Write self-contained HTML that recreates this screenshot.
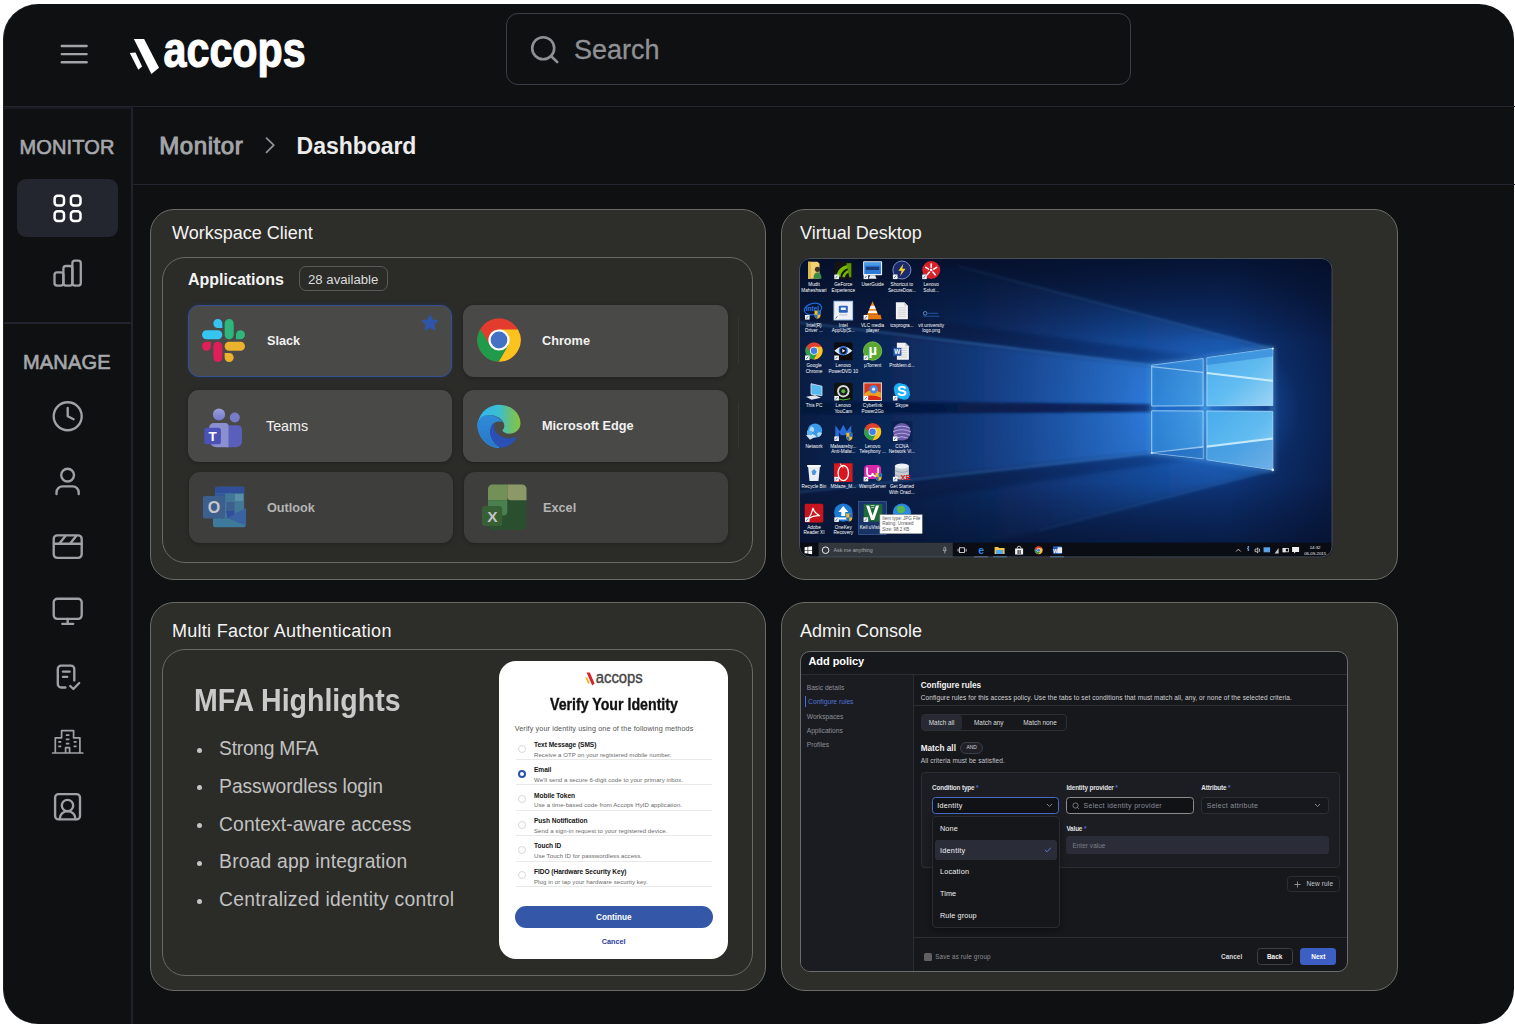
<!DOCTYPE html>
<html lang="en">
<head>
<meta charset="utf-8">
<title>Accops Dashboard</title>
<style>
*{box-sizing:border-box;margin:0;padding:0}
html,body{width:1515px;height:1031px;overflow:hidden;background:#fff}
body{position:relative;font-family:"Liberation Sans",sans-serif;color:#fff;-webkit-font-smoothing:antialiased}
.abs{position:absolute}
.win{position:absolute;left:2.7px;top:3.8px;width:1511.6px;height:1019.9px;background:#0f1012;border-radius:35px;overflow:hidden;border-left:1px solid #1d2029}
.hline{position:absolute;height:1px;background:#23262e}
.vline{position:absolute;width:1px;background:#23262e}
.t{position:absolute;white-space:nowrap;line-height:1}
svg{position:absolute;overflow:visible}
.ico{fill:none;stroke:#a0a1a6;stroke-width:2.35;stroke-linecap:round;stroke-linejoin:round}
.card{position:absolute;background:#2d2d29;border:1px solid #6b6b68;border-radius:24px}
.panel{position:absolute;background:#2b2b28;border:1px solid #696966;border-radius:23px}
.tile{position:absolute;background:#494947;border-radius:11px;box-shadow:0 1px 4px rgba(0,0,0,.25)}
.tile .lbl{position:absolute;left:78px;top:0;height:100%;display:flex;align-items:center;font-size:12.7px;font-weight:700;color:#f2f2f2;white-space:nowrap}
</style>
</head>
<body>
<div class="win"></div>

<!-- ===== header ===== -->
<div class="hline" style="left:3px;top:105.5px;width:1512px;height:1.2px"></div>
<svg style="left:60px;top:44px" width="28" height="20" viewBox="0 0 28 20"><g stroke="#a3a4a8" stroke-width="2.4" stroke-linecap="round"><line x1="1.8" y1="2" x2="26.6" y2="2"/><line x1="1.8" y1="10.1" x2="26.6" y2="10.1"/><line x1="1.8" y1="18.3" x2="26.6" y2="18.3"/></g></svg>
<!-- logo -->
<svg style="left:128px;top:30px" width="190" height="56" viewBox="0 0 190 56">
  <polygon points="5.9,9 16.1,9 31,37.8 23.4,44" fill="#fff"/>
  <polygon points="1.8,23 7.5,22.5 14.1,36.5 10.3,39.7" fill="#fff"/>
  <text x="35.6" y="36.6" font-family="Liberation Sans, sans-serif" font-weight="700" font-size="50" fill="#fff" stroke="#fff" stroke-width="1.2" stroke-linejoin="round" textLength="142" lengthAdjust="spacingAndGlyphs">accops</text>
</svg>
<!-- search -->
<div class="abs" style="left:506px;top:13px;width:625px;height:72px;border:1px solid #3c3f48;border-radius:12px"></div>
<svg style="left:528px;top:34px" width="34" height="32" viewBox="0 0 34 32"><g fill="none" stroke="#8f9095" stroke-width="2.6" stroke-linecap="round"><circle cx="15.2" cy="14.2" r="11"/><line x1="23.2" y1="22.2" x2="29.2" y2="28"/></g></svg>
<div class="t" style="left:574px;top:36.5px;font-size:27px;color:#909196;line-height:27px;-webkit-text-stroke:.3px #909196">Search</div>

<!-- ===== sidebar ===== -->
<div class="vline" style="left:131.2px;top:106px;height:918px;width:1.4px;background:#20232b"></div>
<div class="hline" style="left:3px;top:106.5px;width:128.5px;height:2.3px;background:#191c24"></div>
<div class="t" style="left:19.6px;top:136.5px;font-size:20px;color:#a6a7ab;letter-spacing:.12px;line-height:20px;-webkit-text-stroke:.65px #a6a7ab">MONITOR</div>
<div class="abs" style="left:17px;top:179px;width:101px;height:58px;border-radius:9px;background:#23262f"></div>
<div class="hline" style="left:3px;top:322px;width:129px;height:1.6px;background:#1f232c"></div>
<div class="t" style="left:22.9px;top:351.8px;font-size:20px;color:#a6a7ab;letter-spacing:.2px;line-height:20px;-webkit-text-stroke:.65px #a6a7ab">MANAGE</div>

<!-- ===== breadcrumb ===== -->
<div class="hline" style="left:132.5px;top:183.6px;width:1382px"></div>
<div class="t" style="left:159.3px;top:134.4px;font-size:24px;color:#a3a4a8;line-height:24px;-webkit-text-stroke:1px #a3a4a8;letter-spacing:.55px">Monitor</div>
<svg style="left:264px;top:136px" width="12" height="18" viewBox="0 0 12 18"><polyline points="2.5,2.2 9.8,9.2 2.5,16.4" fill="none" stroke="#8f9095" stroke-width="1.8" stroke-linecap="round" stroke-linejoin="round"/></svg>
<div class="t" style="left:296.6px;top:135.2px;font-size:23px;font-weight:700;color:#ececec;line-height:23px;letter-spacing:-.05px">Dashboard</div>

<!-- ===== cards ===== -->
<div class="card" style="left:150px;top:209px;width:616px;height:371px"></div>
<div class="card" style="left:781px;top:209px;width:617px;height:371px"></div>
<div class="card" style="left:150px;top:602px;width:616px;height:389px"></div>
<div class="card" style="left:781px;top:602px;width:617px;height:389px"></div>
<div class="t" style="left:172px;top:224.4px;font-size:18px;color:#f4f4f4;line-height:18px">Workspace Client</div>
<div class="t" style="left:800px;top:224.4px;font-size:18px;color:#f4f4f4;line-height:18px">Virtual Desktop</div>
<div class="t" style="left:172px;top:621.5px;font-size:18px;color:#f4f4f4;line-height:18px;letter-spacing:.28px">Multi Factor Authentication</div>
<div class="t" style="left:800px;top:621.5px;font-size:18px;color:#f4f4f4;line-height:18px">Admin Console</div>

<svg style="left:0;top:0" width="133" height="1031" viewBox="0 0 133 1031">
 <g fill="none" stroke="#fff" stroke-width="2.5" stroke-linejoin="round">
  <rect x="54.6" y="195.8" width="9.4" height="9.6" rx="3"/><rect x="70.9" y="195.8" width="9.6" height="9.6" rx="3"/>
  <rect x="54.6" y="211.3" width="9.4" height="9.7" rx="3"/><rect x="70.9" y="211.3" width="9.6" height="9.7" rx="3"/>
 </g>
 <g class="ico" style="stroke-width:2.3">
  <rect x="54.5" y="272.3" width="8.9" height="13.3" rx="2.6"/><rect x="63.4" y="266" width="9" height="19.6" rx="2.6"/><rect x="72.4" y="260.6" width="8.4" height="25" rx="2.6"/>
 </g>
 <g class="ico">
  <circle cx="67.7" cy="416.2" r="14"/><polyline points="67.7,408 67.7,416.3 73.6,419.3"/>
  <circle cx="67.6" cy="475.1" r="6.4"/><path d="M56.5,494v-1.6a6,6 0 0 1 6,-6h10.2a6,6 0 0 1 6,6v1.6"/>
  <rect x="53.7" y="535.3" width="28" height="22.6" rx="3.6"/><line x1="54" y1="543.7" x2="81.5" y2="543.7"/><line x1="59.6" y1="543.2" x2="65.2" y2="536.2"/><line x1="70.4" y1="543.2" x2="76" y2="536.2"/>
  <rect x="53.7" y="598.7" width="28" height="20.2" rx="3.6"/><line x1="67.7" y1="619" x2="67.7" y2="623.6"/><line x1="62.3" y1="623.8" x2="73.2" y2="623.8"/>
  <path d="M65.4,687.5H61.2a3.4,3.4 0 0 1 -3.4,-3.4V669a3.4,3.4 0 0 1 3.4,-3.4H70.9a3.4,3.4 0 0 1 3.4,3.4V680.4"/><line x1="63" y1="671.6" x2="69.6" y2="671.6"/><line x1="63" y1="676.8" x2="67.2" y2="676.8"/><polyline points="70.2,686 73.4,689 79.2,683"/>
  <rect x="55.1" y="794.1" width="24.9" height="25.3" rx="3.4"/><circle cx="67.5" cy="805.5" r="5.7"/><path d="M59.7,819a7.9,7.9 0 0 1 15.8,0"/>
 </g>
 <g class="ico" style="stroke-width:1.7;stroke-linecap:butt">
  <line x1="52.6" y1="753" x2="82.8" y2="753" style="stroke-linecap:round"/>
  <polyline points="55.3,753 55.3,737.8 61.6,737.8 61.6,730.6 73.6,730.6 73.6,737.8 79.9,737.8 79.9,753"/>
  <polyline points="65.6,753 65.6,747.6 69.6,747.6 69.6,753"/>
  <path d="M65.8,735.2h3.6M65.8,739.4h3.6M65.8,743.6h3.6M58.3,741.8h3M58.3,746.3h3M58.3,750h0M73.6,741.8h3M73.6,746.3h3M73,739h0"/>
 </g>
</svg>
<!-- ===== workspace client ===== -->
<div class="panel" style="left:162px;top:257px;width:591px;height:306px"></div>
<div class="abs" style="left:738px;top:317px;width:1px;height:47px;background:#353532"></div><div class="abs" style="left:738px;top:402px;width:1px;height:47px;background:#353532"></div>
<div class="t" style="left:188px;top:272px;font-size:16px;font-weight:700;color:#f4f4f4;line-height:16px">Applications</div>
<div class="abs" style="left:299px;top:266px;width:89px;height:25px;border:1px solid #5a5a58;border-radius:7px"></div>
<div class="t" style="left:308px;top:272.5px;font-size:13.2px;color:#dcdcdc;line-height:13px">28 available</div>

<div class="tile" style="left:188px;top:305px;width:264px;height:72px;border:1px solid #34518f;box-shadow:0 0 5px rgba(40,70,140,.35)"><span class="lbl">Slack</span></div>
<div class="tile" style="left:463px;top:305px;width:265px;height:72px"><span class="lbl" style="left:79px">Chrome</span></div>
<div class="tile" style="left:188px;top:390px;width:264px;height:72px"><span class="lbl" style="font-weight:400;font-size:14.3px;left:78px">Teams</span></div>
<div class="tile" style="left:463px;top:390px;width:265px;height:72px"><span class="lbl" style="left:79px">Microsoft Edge</span></div>
<div class="tile" style="left:189px;top:472px;width:264px;height:71px;background:#3e3e3c"><span class="lbl" style="color:#b4b4b4">Outlook</span></div>
<div class="tile" style="left:464px;top:472px;width:264px;height:71px;background:#3e3e3c"><span class="lbl" style="color:#b4b4b4;left:79px">Excel</span></div>

<!-- star -->
<svg style="left:421px;top:314px" width="18" height="17" viewBox="0 0 18 17"><path d="M9,0.8 L11.5,6 17.2,6.7 13,10.6 14.1,16.3 9,13.5 3.9,16.3 5,10.6 0.8,6.7 6.5,6Z" fill="#2f55a8" stroke="#2f55a8" stroke-width="1" stroke-linejoin="round"/></svg>
<!-- slack -->
<svg style="left:202px;top:319px" width="43" height="43" viewBox="0 0 122.8 122.8">
<path d="M25.8 77.6c0 7.1-5.8 12.900-12.900 12.900S0 84.700 0 77.600s5.800-12.900 12.900-12.900h12.900v12.900zm6.500 0c0-7.100 5.800-12.900 12.900-12.900s12.900 5.800 12.900 12.900v32.300c0 7.100-5.800 12.900-12.900 12.900s-12.900-5.800-12.900-12.900V77.600z" fill="#e01e5a"/>
<path d="M45.200 25.800c-7.100 0-12.900-5.800-12.900-12.900S38.100 0 45.200 0s12.900 5.800 12.900 12.900v12.900H45.200zm0 6.500c7.100 0 12.900 5.800 12.900 12.900s-5.800 12.900-12.900 12.900H12.900C5.800 58.100 0 52.300 0 45.200s5.800-12.900 12.900-12.900h32.300z" fill="#36c5f0"/>
<path d="M97 45.200c0-7.100 5.800-12.900 12.900-12.900s12.900 5.800 12.900 12.900-5.800 12.900-12.900 12.900H97V45.200zm-6.500 0c0 7.100-5.800 12.900-12.900 12.900s-12.900-5.800-12.900-12.900V12.900C64.700 5.800 70.500 0 77.600 0s12.900 5.800 12.900 12.900v32.300z" fill="#2eb67d"/>
<path d="M77.600 97c7.100 0 12.900 5.800 12.900 12.900s-5.800 12.900-12.900 12.900-12.900-5.800-12.900-12.900V97h12.900zm0-6.500c-7.100 0-12.900-5.800-12.900-12.900s5.800-12.900 12.900-12.900h32.300c7.100 0 12.900 5.800 12.900 12.900s-5.800 12.900-12.900 12.900H77.600z" fill="#ecb22e"/>
</svg>
<!-- chrome -->
<svg style="left:474.6px;top:316.4px" width="48" height="48" viewBox="0 0 48 48">
<circle cx="24" cy="24" r="21.7" fill="#e33b2e"/>
<path d="M24.00,13.40 L42.93,13.40 A21.7,21.7 0 0 1 23.71,45.70 L33.18,29.30 Z" fill="#fcc31e"/>
<path d="M33.18,29.30 L23.71,45.70 A21.7,21.7 0 0 1 5.35,12.90 L14.82,29.30 Z" fill="#1f9b4b"/>
<circle cx="24" cy="24" r="10.6" fill="#fff"/><circle cx="24" cy="24" r="8.4" fill="#4471c4"/>
</svg>
<!-- teams -->
<svg style="left:200px;top:404px" width="48" height="48" viewBox="200 404 48 48">
<defs><linearGradient id="tg1" x1="0" y1="0" x2="0" y2="1"><stop offset="0" stop-color="#9aa0dc"/><stop offset="1" stop-color="#7378c8"/></linearGradient></defs>
<circle cx="219" cy="414.5" r="6.1" fill="url(#tg1)"/><circle cx="234.8" cy="417.5" r="5" fill="#787cc8"/>
<path d="M226,425.300h11.500a4.500,4.500 0 0 1 4.500,4.500v11.500a6,6 0 0 1 -6,6h-10z" fill="#5a5fba"/>
<path d="M214,423h11.200a3.300,3.300 0 0 1 3.300,3.300v21h-11.500a8,8 0 0 1 -8,-8v-11.300a5,5 0 0 1 5,-5z" fill="#8a8fd0"/>
<rect x="204.200" y="427.800" width="16.700" height="16.500" rx="2.600" fill="#4a52b6"/>
<text x="212.600" y="440.600" text-anchor="middle" font-family="Liberation Sans, sans-serif" font-weight="700" font-size="13.500" fill="#fff">T</text>
</svg>
<!-- edge -->
<svg style="left:465px;top:395px" width="80" height="65" viewBox="0 0 126.900 103.100">
<defs><linearGradient id="eg1" x1="0" y1="0" x2="1" y2="0"><stop offset="0" stop-color="#2fb4f0"/><stop offset=".5" stop-color="#3bbfd0"/><stop offset=".78" stop-color="#6cc070"/><stop offset="1" stop-color="#86c540"/></linearGradient>
<linearGradient id="eg2" x1="0" y1="0" x2="0" y2="1"><stop offset="0" stop-color="#2f8bd8"/><stop offset="1" stop-color="#2a76c8"/></linearGradient></defs>
<path d="M82.500,65.500 C76,69.500 66,70.500 58,66 C48,61 44,53 47.500,45 L40,50 C36,60 40,75 54,83.500 C68,84.500 79,76 82.500,65.500Z" fill="#2950b2"/>
<path d="M20.300,44 C18.500,62 32,83 54,83.500 C42,76 35,62 40.500,50 C44,43 51,40 59,42 C53,35 41,30.500 30,33.500 C25,35.500 22,39 20.300,44Z" fill="url(#eg2)" stroke="#2f8bd8" stroke-width="1.4"/>
<path d="M20.300,44 C24,25 40,15.300 54,15.300 C73,15.300 88,29 88,45 C88,55 80,61.500 70,61.500 C65,61.500 61,59.500 59,56.500 C62.500,53 63.500,48 61,43.500 C56,34.500 42,29 30,33.500 C25,35.500 22,39 20.300,44Z" fill="url(#eg1)"/>
</svg>
<!-- outlook -->
<svg style="left:200px;top:482px" width="50" height="50" viewBox="200 482 50 50">
<rect x="215.200" y="486.700" width="29" height="32" rx="2" fill="#427798"/>
<path d="M217.200,486.700h25a2,2 0 0 1 2,2v4.600h-29v-4.600a2,2 0 0 1 2,-2z" fill="#2f4f9a"/>
<rect x="215.200" y="493.300" width="10" height="9" fill="#34599a"/><rect x="226.500" y="502" width="8" height="9.500" fill="#3d5f8e"/><rect x="235" y="494" width="8" height="7" fill="#5a8ea8"/>
<path d="M213,518v7.300a2,2 0 0 0 2,2h28.800a2,2 0 0 0 2,-2v-16.800l-19,10z" fill="#3e7a9c"/>
<path d="M245.800,508.500v17l-19.800,-8z" fill="#3a62a0"/>
<path d="M226,511l8.500,0 0,3.200 -7,3.800z" fill="#2f4f9a"/>
<rect x="202.900" y="496.100" width="22.100" height="22.400" rx="1.800" fill="#3c5f8e"/>
<text x="214" y="512.600" text-anchor="middle" font-family="Liberation Sans, sans-serif" font-weight="700" font-size="16" fill="#c8c8c8">O</text>
</svg>
<!-- excel -->
<svg style="left:480px;top:482px" width="50" height="50" viewBox="480 482 50 50">
<rect x="488" y="484.500" width="38.500" height="45.400" rx="4.500" fill="#2a4f2e"/>
<path d="M492.500,484.500h14.800v15.800h-19.300v-11.300a4.500,4.500 0 0 1 4.500,-4.500z" fill="#739058"/>
<path d="M507.300,484.500h14.700a4.500,4.500 0 0 1 4.500,4.500v11.300h-15.500a3.700,3.700 0 0 1 -3.700,-3.700z" fill="#8c9868"/>
<path d="M488,500.300h19.300v11.200a4,4 0 0 1 -4,4h-15.300z" fill="#4a8050"/>
<rect x="482" y="505.900" width="20.200" height="20.200" rx="3.200" fill="#376037"/>
<text x="492.300" y="521.800" text-anchor="middle" font-family="Liberation Sans, sans-serif" font-weight="700" font-size="15.500" fill="#c4c4c4">X</text>
</svg>

<!--DESKTOP-->
<!-- ===== virtual desktop ===== -->
<svg style="left:799.4px;top:257.5px" width="533.6" height="299.5" viewBox="799.4 257.5 533.6 299.5" font-family="Liberation Sans, sans-serif">
<defs>
<clipPath id="dclip"><rect x="799.4" y="257.5" width="533.6" height="299.5" rx="10.5"/></clipPath>
<radialGradient id="dglow" cx="1165" cy="410" r="235" gradientUnits="userSpaceOnUse" gradientTransform="translate(1165 410) scale(1 .72) translate(-1165 -410)"><stop offset="0" stop-color="#1d6cd2" stop-opacity=".8"/><stop offset=".3" stop-color="#1558b8" stop-opacity=".46"/><stop offset=".65" stop-color="#0f4090" stop-opacity=".2"/><stop offset="1" stop-color="#0a2560" stop-opacity="0"/></radialGradient>
<radialGradient id="dhalo" cx="1208" cy="408" r="92" gradientUnits="userSpaceOnUse" gradientTransform="translate(1208 408) scale(1 .85) translate(-1208 -408)"><stop offset="0" stop-color="#3aa0f8" stop-opacity=".5"/><stop offset=".55" stop-color="#2a86ea" stop-opacity=".26"/><stop offset="1" stop-color="#1f74dc" stop-opacity="0"/></radialGradient>
<linearGradient id="dbg" x1="0" y1="0" x2="1" y2="0"><stop offset="0" stop-color="#0a1a3e"/><stop offset=".4" stop-color="#0b2150"/><stop offset=".8" stop-color="#0c2b66"/><stop offset="1" stop-color="#091b44"/></linearGradient>
<linearGradient id="dvig" x1="0" y1="0" x2="0" y2="1"><stop offset="0" stop-color="#030a1e" stop-opacity=".7"/><stop offset=".28" stop-color="#030a1e" stop-opacity="0"/><stop offset=".75" stop-color="#030a1e" stop-opacity="0"/><stop offset="1" stop-color="#030a1e" stop-opacity=".55"/></linearGradient>
<linearGradient id="beam" x1="1160" y1="0" x2="800" y2="0" gradientUnits="userSpaceOnUse"><stop offset="0" stop-color="#3484e2" stop-opacity=".8"/><stop offset=".4" stop-color="#2264c2" stop-opacity=".5"/><stop offset=".75" stop-color="#184c9c" stop-opacity=".22"/><stop offset="1" stop-color="#164694" stop-opacity=".06"/></linearGradient>
<linearGradient id="beam2" x1="1270" y1="0" x2="880" y2="0" gradientUnits="userSpaceOnUse"><stop offset="0" stop-color="#2a80e6" stop-opacity=".5"/><stop offset=".5" stop-color="#1e62c4" stop-opacity=".28"/><stop offset="1" stop-color="#16469c" stop-opacity=".04"/></linearGradient>
<linearGradient id="shade" x1="1160" y1="0" x2="800" y2="0" gradientUnits="userSpaceOnUse"><stop offset="0" stop-color="#092560" stop-opacity=".95"/><stop offset=".6" stop-color="#071a46" stop-opacity=".95"/><stop offset="1" stop-color="#07163a" stop-opacity=".8"/></linearGradient>
<linearGradient id="paneL" x1="0" y1="0" x2="1" y2="0"><stop offset="0" stop-color="#3088da"/><stop offset="1" stop-color="#4aa6ea"/></linearGradient>
<linearGradient id="paneR" x1="0" y1="0" x2="1" y2="1"><stop offset="0" stop-color="#4aaeee"/><stop offset=".55" stop-color="#66c2f5"/><stop offset="1" stop-color="#a4dcfa"/></linearGradient>
<filter id="b1" x="-10%" y="-10%" width="120%" height="120%"><feGaussianBlur stdDeviation="2.6"/></filter>
<filter id="b2" x="-10%" y="-10%" width="120%" height="120%"><feGaussianBlur stdDeviation="1.1"/></filter>
</defs>
<g clip-path="url(#dclip)">
<rect x="799.4" y="257.5" width="533.6" height="299.5" fill="url(#dbg)"/>
<rect x="799.4" y="257.5" width="533.6" height="299.5" fill="url(#dglow)"/>
<g filter="url(#b1)">
<polygon points="1273,348.600 1203.600,357 800,301.600 800,257 927,257" fill="url(#beam2)"/>
<polygon points="1152.300,364.700 800,321.900 800,403 1152.300,405" fill="url(#beam)"/>
<polygon points="1152.300,410 800,411.500 800,491.700 1152.300,452.600" fill="url(#beam)"/>
<polygon points="1273,469.300 1203.600,457 800,516 800,557 938,557" fill="url(#beam2)" opacity=".9"/>
</g><g filter="url(#b2)">
<polygon points="1152.300,403.800 800,400.800 800,413.600 1152.300,411.200" fill="url(#shade)"/>
</g>
<g stroke-linecap="round" fill="none" filter="url(#b2)">
<line x1="1273" y1="348.600" x2="960" y2="266" stroke="#58a8f6" stroke-opacity=".3" stroke-width="1.600"/>
<line x1="1152.300" y1="364.700" x2="800" y2="321.900" stroke="#58a8f6" stroke-opacity=".38" stroke-width="1.600"/>
<line x1="1152.300" y1="452.600" x2="800" y2="491.700" stroke="#58a8f6" stroke-opacity=".3" stroke-width="1.600"/>
<line x1="1273" y1="469.300" x2="1040" y2="530" stroke="#58a8f6" stroke-opacity=".18" stroke-width="1.600"/>
</g>
<rect x="799.4" y="257.5" width="533.6" height="299.5" fill="url(#dhalo)"/>
<rect x="799.4" y="257.5" width="533.6" height="299.5" fill="url(#dvig)"/>
<g fill="none" stroke="#6cc4ff" stroke-width="2.400" stroke-opacity=".6" filter="url(#b1)"><polygon points="1152.100,364.800 1203.500,358.100 1203.500,458.300 1152.100,452.500"/><polygon points="1207.300,357.200 1273.200,348 1273.200,469.400 1207.300,459.200"/></g>
<g stroke="#b4e0ff" stroke-width=".8" stroke-linejoin="round">
<polygon points="1152.100,364.800 1203.500,358.100 1203.500,405.300 1152.100,405.500" fill="url(#paneL)" fill-opacity=".8"/>
<polygon points="1152.100,410.300 1203.500,410.500 1203.500,458.300 1152.100,452.500" fill="url(#paneL)" fill-opacity=".8"/>
<polygon points="1207.300,357.200 1273.200,348 1273.200,405 1207.300,405.300" fill="url(#paneR)" fill-opacity=".95"/>
<polygon points="1207.300,410.500 1273.200,410.800 1273.200,469.400 1207.300,459.200" fill="url(#paneR)" fill-opacity=".95"/>
</g>
<polygon points="1207.300,357.200 1273.200,348 1273.200,356 1207.300,364.500" fill="#2a7cd4" opacity=".55"/>
<polygon points="1207.300,371.600 1273.200,379.300 1273.200,381.300 1207.300,373.600" fill="#e0f6ff" opacity=".8"/>
<polygon points="1152.100,364.800 1203.500,358.100 1203.500,371.800 1152.100,366" fill="#2a7cd4" opacity=".4"/>
<polygon points="1152.100,365.400 1203.500,371.200 1203.500,372.600 1152.100,366.800" fill="#e0f6ff" opacity=".55"/>
<polygon points="1207.300,445 1273.200,437 1273.200,439.200 1207.300,447.200" fill="#e0f6ff" opacity=".75"/>
<polygon points="1207.300,447.200 1273.200,439.200 1273.200,469.400 1207.300,459.200" fill="#2a7ad0" opacity=".4"/>
<polygon points="1152.100,451.800 1203.500,445.600 1203.500,447.200 1152.100,453" fill="#e0f6ff" opacity=".5"/>
<polygon points="1152.100,452.500 1203.500,447.200 1203.500,458.300" fill="#1a5ab4" opacity=".5"/>
<circle cx="1273.200" cy="348" r="1.100" fill="#fff" opacity=".8"/><circle cx="1273.200" cy="469.400" r="1.300" fill="#fff" opacity=".85"/><circle cx="1152.100" cy="452.500" r="1" fill="#fff" opacity=".7"/>
<g>
<path d="M808.4,261.3h9.500l2,2v15h-11.500z" fill="#f0d070"/><path d="M808.4,261.3h3v17h-3z" fill="#e0b850"/><circle cx="817.9" cy="268.8" r="2.600" fill="#3a3020"/><path d="M813.9,278.3q0,-6.500 4,-6.500q4,0 4,6.500z" fill="#3e8a4a"/>
<text x="814.4" y="285.6" text-anchor="middle" font-size="4.700" fill="#fff">Mudit</text>
<text x="814.4" y="291.1" text-anchor="middle" font-size="4.700" fill="#fff">Maheshwari</text>
<rect x="834.7" y="261.3" width="18" height="17.500" fill="#141414"/><path d="M836.7,276.8q1,-11 13,-12.500v3q-8,1.500 -9,9.500zM842.7,276.8q1,-6 7,-7.500v2.500q-3.500,1 -4.500,5z" fill="#76b900"/><path d="M846.7,262.8l5,0 0,14 -2,0z" fill="#5a9a00"/><rect x="834.7" y="274.0" width="4.600" height="4.600" fill="#f4f4f4"/><path d="M835.9,277.6l2,-2.400" stroke="#2a5ab0" stroke-width=".8" fill="none"/>
<text x="843.7" y="285.6" text-anchor="middle" font-size="4.700" fill="#fff">GeForce</text>
<text x="843.7" y="291.1" text-anchor="middle" font-size="4.700" fill="#fff">Experience</text>
<rect x="863.5" y="260.8" width="19" height="14" rx=".8" fill="#e8eef4"/><rect x="864.7" y="262.0" width="16.600" height="11.500" fill="#2a7ad8"/><rect x="866.5" y="266.3" width="13" height="3.200" fill="#1a3a7a"/><rect x="864.7" y="262.0" width="16.600" height="3" fill="#4a9ae8"/><path d="M870.5,274.8h5l1.500,3.500h-8z" fill="#e8eef4"/><rect x="864.0" y="274.0" width="4.600" height="4.600" fill="#f4f4f4"/><path d="M865.2,277.6l2,-2.400" stroke="#2a5ab0" stroke-width=".8" fill="none"/>
<text x="873.0" y="285.6" text-anchor="middle" font-size="4.700" fill="#fff">UserGuide</text>
<circle cx="902.3" cy="269.5" r="9" fill="#1a2a6c" stroke="#8a9ad0" stroke-width=".9"/><path d="M903.8,263.3l-5,7h3.200l-1.500,5.500 5.500,-7.500h-3.300z" fill="#f8d030"/><rect x="893.3" y="274.0" width="4.600" height="4.600" fill="#f4f4f4"/><path d="M894.5,277.6l2,-2.400" stroke="#2a5ab0" stroke-width=".8" fill="none"/>
<text x="902.3" y="285.6" text-anchor="middle" font-size="4.700" fill="#fff">Shortcut to</text>
<text x="902.3" y="291.1" text-anchor="middle" font-size="4.700" fill="#fff">SecureDow...</text>
<circle cx="931.6" cy="269.5" r="9" fill="#d8222a"/><g stroke="#fff" stroke-width="1.500" stroke-linecap="round"><path d="M931.6,263.5v3.500M926.1,266.8l3,1.800M937.1,266.8l-3,1.800M927.6,274.3l2.300,-2.800M935.6,274.3l-2.300,-2.800"/></g><circle cx="931.6" cy="269.5" r="1.300" fill="#fff"/><rect x="922.6" y="274.0" width="4.600" height="4.600" fill="#f4f4f4"/><path d="M923.8,277.6l2,-2.400" stroke="#2a5ab0" stroke-width=".8" fill="none"/>
<text x="931.6" y="285.6" text-anchor="middle" font-size="4.700" fill="#fff">Lenovo</text>
<text x="931.6" y="291.1" text-anchor="middle" font-size="4.700" fill="#fff">Soluti...</text>
<ellipse cx="813.9" cy="308.3" rx="8.800" ry="5.600" fill="none" stroke="#1a6ad0" stroke-width="1.200" transform="rotate(-14 814.4 310.3)"/><text x="812.9" y="310.3" text-anchor="middle" font-size="6.500" font-weight="700" fill="#2a7ae0">intel</text><path d="M814.9,310.3h6v4.500q0,2.500 -3,3.500q-3,-1 -3,-3.500z" fill="#f0c020"/><path d="M817.9,310.3h3v4h-3z" fill="#2a6ad0"/><path d="M814.9,314.3h3v3.800q-3,-1 -3,-3.500z" fill="#2a6ad0"/><rect x="805.4" y="314.5" width="4.600" height="4.600" fill="#f4f4f4"/><path d="M806.6,318.1l2,-2.400" stroke="#2a5ab0" stroke-width=".8" fill="none"/>
<text x="814.4" y="326.1" text-anchor="middle" font-size="4.700" fill="#fff">Intel(R)</text>
<text x="814.4" y="331.6" text-anchor="middle" font-size="4.700" fill="#fff">Driver ...</text>
<rect x="834.4" y="300.8" width="18.600" height="18.600" fill="#eef2f8"/><rect x="834.4" y="300.8" width="18.600" height="18.600" fill="none" stroke="#a8c8f0" stroke-width="1"/><rect x="839.2" y="305.3" width="9" height="7" rx="1" fill="#2a62b8"/><rect x="841.2" y="307.0" width="5" height="2.500" fill="#e8f0fa"/><rect x="839.7" y="313.8" width="8" height="1.200" fill="#c0c8d4"/><rect x="834.7" y="314.5" width="4.600" height="4.600" fill="#f4f4f4"/><path d="M835.9,318.1l2,-2.400" stroke="#2a5ab0" stroke-width=".8" fill="none"/>
<text x="843.7" y="326.1" text-anchor="middle" font-size="4.700" fill="#fff">Intel</text>
<text x="843.7" y="331.6" text-anchor="middle" font-size="4.700" fill="#fff">AppUp(S...</text>
<path d="M873.0,300.8l5.500,13.500h-11z" fill="#f08a18"/><path d="M871.1,305.3h3.800l1.300,3.200h-6.400zM869.2,310.3h7.600l1,2.300h-9.600z" fill="#f4f4f4"/><path d="M865.0,314.3h16l1,4.500h-18z" fill="#e87810"/><rect x="864.0" y="314.5" width="4.600" height="4.600" fill="#f4f4f4"/><path d="M865.2,318.1l2,-2.400" stroke="#2a5ab0" stroke-width=".8" fill="none"/>
<text x="873.0" y="326.1" text-anchor="middle" font-size="4.700" fill="#fff">VLC media</text>
<text x="873.0" y="331.6" text-anchor="middle" font-size="4.700" fill="#fff">player</text>
<path d="M896.3,301.8h8.500l3.500,3.500v13.500h-12z" fill="#f2f2f2"/><path d="M904.8,301.8v3.500h3.500z" fill="#c8c8c8"/><path d="M898.3,307.3h8M898.3,309.5h8M898.3,311.7h8M898.3,313.9h8M898.3,316.1h8" stroke="#b8b8b8" stroke-width=".55"/>
<text x="902.3" y="326.1" text-anchor="middle" font-size="4.700" fill="#fff">tcsprogra...</text>
<circle cx="925.6" cy="312.8" r="1.800" fill="none" stroke="#7ab0e8" stroke-width=".7"/><rect x="928.6" y="312.3" width="10" height=".9" fill="#2a5aa8"/><rect x="923.6" y="315.3" width="16" height=".8" fill="#2a5aa8"/>
<text x="931.6" y="326.1" text-anchor="middle" font-size="4.700" fill="#fff">vit university</text>
<text x="931.6" y="331.6" text-anchor="middle" font-size="4.700" fill="#fff">logo.png</text>
<circle cx="814.4" cy="350.3" r="8.6" fill="#e0402e"/><path d="M814.40,346.26L821.99,346.26A8.6,8.6 0 0 1 814.10,358.89L817.90,352.32Z" fill="#f8c420"/><path d="M817.90,352.32L814.10,358.89A8.6,8.6 0 0 1 807.10,345.75L810.90,352.32Z" fill="#2da04e"/><circle cx="814.4" cy="350.3" r="4.04" fill="#f4f4f4"/><circle cx="814.4" cy="350.3" r="3.23" fill="#3f80e8"/><rect x="805.4" y="355.0" width="4.600" height="4.600" fill="#f4f4f4"/><path d="M806.6,358.6l2,-2.400" stroke="#2a5ab0" stroke-width=".8" fill="none"/>
<text x="814.4" y="366.6" text-anchor="middle" font-size="4.700" fill="#fff">Google</text>
<text x="814.4" y="372.1" text-anchor="middle" font-size="4.700" fill="#fff">Chrome</text>
<rect x="834.4" y="341.8" width="18.600" height="18" rx="1.500" fill="#0c0c10"/><path d="M834.7,350.3q9,-8.500 18,0q-9,8.500 -18,0z" fill="#dceaff"/><circle cx="843.7" cy="350.3" r="4.600" fill="#2a6ad8"/><circle cx="843.7" cy="350.3" r="3.100" fill="#0c1020"/><path d="M842.7,348.5l3,1.800 -3,1.800z" fill="#fff"/><rect x="834.7" y="355.0" width="4.600" height="4.600" fill="#f4f4f4"/><path d="M835.9,358.6l2,-2.400" stroke="#2a5ab0" stroke-width=".8" fill="none"/>
<text x="843.7" y="366.6" text-anchor="middle" font-size="4.700" fill="#fff">Lenovo</text>
<text x="843.7" y="372.1" text-anchor="middle" font-size="4.700" fill="#fff">PowerDVD 10</text>
<circle cx="873.0" cy="350.5" r="9.200" fill="#5aa832"/><circle cx="873.0" cy="350.5" r="9.200" fill="none" stroke="#7cc850" stroke-width=".8"/><text x="873.3" y="355.0" text-anchor="middle" font-size="15" font-weight="700" fill="#fff">µ</text><rect x="864.0" y="355.0" width="4.600" height="4.600" fill="#f4f4f4"/><path d="M865.2,358.6l2,-2.400" stroke="#2a5ab0" stroke-width=".8" fill="none"/>
<text x="873.0" y="366.6" text-anchor="middle" font-size="4.700" fill="#fff">µTorrent</text>
<path d="M897.3,342.3h8.500l3.500,3.500v13.500h-12z" fill="#f2f2f2"/><path d="M905.8,342.3v3.500h3.500z" fill="#c8c8c8"/><path d="M899.3,347.8h8M899.3,350.0h8M899.3,352.2h8M899.3,354.4h8M899.3,356.6h8" stroke="#b8b8b8" stroke-width=".55"/><rect x="893.8" y="347.3" width="8" height="8" fill="#2a5ab4"/><text x="897.8" y="353.6" text-anchor="middle" font-size="6.400" font-weight="700" fill="#fff">W</text>
<text x="902.3" y="366.6" text-anchor="middle" font-size="4.700" fill="#fff">Problem.d...</text>
<path d="M811.4,383.2l11,2.500v9.500l-11,-1.500z" fill="#58b8f0"/><path d="M811.4,383.2l11,2.500v9.500l-11,-1.500z" fill="none" stroke="#d8eefc" stroke-width=".8"/><path d="M806.4,396.2l9,-1.500 6,2.500 -9.500,2z" fill="#dfe6ee"/><path d="M815.4,394.2v2" stroke="#c8d0d8" stroke-width="1.500"/>
<text x="814.4" y="407.0" text-anchor="middle" font-size="4.700" fill="#fff">This PC</text>
<rect x="834.4" y="382.2" width="18.600" height="18" rx="2" fill="#101210"/><circle cx="843.7" cy="390.7" r="6.200" fill="#d8dcd8"/><circle cx="843.7" cy="390.7" r="4.300" fill="#1a1e1a"/><circle cx="843.7" cy="390.7" r="2" fill="#58b838"/><path d="M836.7,398.2q7,2.500 14,0" stroke="#58b838" stroke-width="1" fill="none"/><rect x="834.7" y="395.4" width="4.600" height="4.600" fill="#f4f4f4"/><path d="M835.9,399.0l2,-2.400" stroke="#2a5ab0" stroke-width=".8" fill="none"/>
<text x="843.7" y="407.0" text-anchor="middle" font-size="4.700" fill="#fff">Lenovo</text>
<text x="843.7" y="412.5" text-anchor="middle" font-size="4.700" fill="#fff">YouCam</text>
<rect x="863.7" y="381.9" width="18.600" height="18.600" fill="#e8e0d8"/><rect x="864.7" y="382.9" width="16.600" height="16.600" fill="#d83820"/><path d="M864.7,393.2q8,-7 16.600,-1v7.300h-16.600z" fill="#f0a020"/><circle cx="874.0" cy="388.7" r="4.200" fill="#4a8ae0"/><circle cx="874.0" cy="388.7" r="1.600" fill="#e8f0ff"/><path d="M864.7,396.2q8,-3 16.600,1v2.300h-16.600z" fill="#d82818"/><rect x="864.0" y="395.4" width="4.600" height="4.600" fill="#f4f4f4"/><path d="M865.2,399.0l2,-2.400" stroke="#2a5ab0" stroke-width=".8" fill="none"/>
<text x="873.0" y="407.0" text-anchor="middle" font-size="4.700" fill="#fff">Cyberlink</text>
<text x="873.0" y="412.5" text-anchor="middle" font-size="4.700" fill="#fff">Power2Go</text>
<circle cx="899.8" cy="388.2" r="5.600" fill="#18a8f0"/><circle cx="904.8" cy="393.7" r="5.600" fill="#18a8f0"/><circle cx="902.3" cy="390.9" r="7.600" fill="#20b0f4"/><text x="902.3" y="396.0" text-anchor="middle" font-size="14.500" font-weight="700" fill="#fff">S</text><rect x="893.3" y="395.4" width="4.600" height="4.600" fill="#f4f4f4"/><path d="M894.5,399.0l2,-2.400" stroke="#2a5ab0" stroke-width=".8" fill="none"/>
<text x="902.3" y="407.0" text-anchor="middle" font-size="4.700" fill="#fff">Skype</text>
<circle cx="815.4" cy="430.2" r="7.200" fill="#3a9ae8"/><path d="M811.4,425.7q4,1 3,5q-3,2 -5,-1zM817.4,432.7q3,-2 5,0q-1,3 -4,4z" fill="#a8dcf8"/><path d="M806.4,434.7l6,-1.500 4.500,2.500 -6.500,3.500z" fill="#d0e4f4"/><path d="M807.4,429.7l5,1v4l-5,-.5z" fill="#58b0f0"/>
<text x="814.4" y="447.5" text-anchor="middle" font-size="4.700" fill="#fff">Network</text>
<path d="M835.7,436.7v-12l4.500,6 3.500,-6.500 3.500,6.500 4.500,-6v12h-3.600v-5l-2,3h-4.800l-2,-3v5z" fill="#2a6ad8"/><path d="M846.7,432.2h6v4.500q0,2.500 -3,3.500q-3,-1 -3,-3.500z" fill="#f0c020"/><path d="M849.7,432.2h3v4h-3z" fill="#2a6ad0"/><path d="M846.7,436.2h3v3.800q-3,-1 -3,-3.500z" fill="#2a6ad0"/><rect x="834.7" y="435.9" width="4.600" height="4.600" fill="#f4f4f4"/><path d="M835.9,439.5l2,-2.400" stroke="#2a5ab0" stroke-width=".8" fill="none"/>
<text x="843.7" y="447.5" text-anchor="middle" font-size="4.700" fill="#fff">Malwareby...</text>
<text x="843.7" y="453.0" text-anchor="middle" font-size="4.700" fill="#fff">Anti-Malw...</text>
<circle cx="873.0" cy="431.2" r="8.6" fill="#e0402e"/><path d="M873.00,427.16L880.59,427.16A8.6,8.6 0 0 1 872.70,439.79L876.50,433.22Z" fill="#f8c420"/><path d="M876.50,433.22L872.70,439.79A8.6,8.6 0 0 1 865.70,426.65L869.50,433.22Z" fill="#2da04e"/><circle cx="873.0" cy="431.2" r="4.04" fill="#f4f4f4"/><circle cx="873.0" cy="431.2" r="3.23" fill="#3f80e8"/>
<text x="873.0" y="447.5" text-anchor="middle" font-size="4.700" fill="#fff">Lenovo</text>
<text x="873.0" y="453.0" text-anchor="middle" font-size="4.700" fill="#fff">Telephony ...</text>
<rect x="891.8" y="420.7" width="21" height="21" fill="#0a1e48" opacity=".7"/><circle cx="902.3" cy="431.2" r="8.800" fill="#6a5aa8"/><path d="M894.3,427.7q8,-4 16,0M893.5,431.2q8.800,-4 17.600,0M894.3,434.7q8,-4 16,0M896.3,437.7q6,-3 12,0" stroke="#b8b0e0" stroke-width=".9" fill="none"/><rect x="893.3" y="435.9" width="4.600" height="4.600" fill="#f4f4f4"/><path d="M894.5,439.5l2,-2.400" stroke="#2a5ab0" stroke-width=".8" fill="none"/>
<text x="902.3" y="447.5" text-anchor="middle" font-size="4.700" fill="#fff">CCNA</text>
<text x="902.3" y="453.0" text-anchor="middle" font-size="4.700" fill="#fff">Network Vi...</text>
<path d="M808.4,465.1l12,0 -1.500,15.500h-9z" fill="#e8eef4"/><path d="M807.6,464.6h13.600v2h-13.600z" fill="#f8fafc"/><path d="M811.9,471.1l2.500,-2.500 2.500,2.500 -1.500,3.500h-2.500z" fill="#4a9ae0"/>
<text x="814.4" y="487.9" text-anchor="middle" font-size="4.700" fill="#fff">Recycle Bin</text>
<rect x="834.4" y="462.8" width="18.600" height="18.600" fill="#d81820"/><ellipse cx="843.7" cy="472.6" rx="5.200" ry="7.600" fill="none" stroke="#fff" stroke-width="1.300"/><path d="M840.7,463.1q1,3 3,4" stroke="#fff" stroke-width="1" fill="none"/><rect x="834.7" y="476.3" width="4.600" height="4.600" fill="#f4f4f4"/><path d="M835.9,479.9l2,-2.400" stroke="#2a5ab0" stroke-width=".8" fill="none"/>
<text x="843.7" y="487.9" text-anchor="middle" font-size="4.700" fill="#fff">Mblaze_M...</text>
<rect x="864.5" y="464.6" width="17" height="14" rx="4" fill="#d828a8"/><path d="M867.5,467.1v5.500q0,3 2.750,3q2.750,0 2.750,-3q0,3 2.750,3q2.750,0 2.750,-3v-5.500" stroke="#fff" stroke-width="1.600" fill="none"/><path d="M876.0,472.6h6v4.500q0,2.500 -3,3.500q-3,-1 -3,-3.500z" fill="#f0c020"/><path d="M879.0,472.6h3v4h-3z" fill="#2a6ad0"/><path d="M876.0,476.6h3v3.800q-3,-1 -3,-3.500z" fill="#2a6ad0"/><rect x="864.0" y="476.3" width="4.600" height="4.600" fill="#f4f4f4"/><path d="M865.2,479.9l2,-2.400" stroke="#2a5ab0" stroke-width=".8" fill="none"/>
<text x="873.0" y="487.9" text-anchor="middle" font-size="4.700" fill="#fff">WampServer</text>
<path d="M895.3,465.6v12q7,3.500 14,0v-12z" fill="#c4ccd4"/><ellipse cx="902.3" cy="465.6" rx="7" ry="2.600" fill="#eef2f6"/><path d="M895.3,470.1q7,3.500 14,0M895.3,474.1q7,3.500 14,0" stroke="#8a96a4" stroke-width=".7" fill="none"/><text x="905.8" y="479.6" text-anchor="middle" font-size="7.500" font-weight="700" fill="#e01818">XE</text><rect x="893.3" y="476.3" width="4.600" height="4.600" fill="#f4f4f4"/><path d="M894.5,479.9l2,-2.400" stroke="#2a5ab0" stroke-width=".8" fill="none"/>
<text x="902.3" y="487.9" text-anchor="middle" font-size="4.700" fill="#fff">Get Started</text>
<text x="902.3" y="493.4" text-anchor="middle" font-size="4.700" fill="#fff">With Oracl...</text>
<rect x="805.1" y="503.3" width="18.600" height="18.600" rx="1.500" fill="#c8141c"/><path d="M808.9,518.1q3,-4 4.500,-10.500q1,4.500 6.500,7.500q-6,-.5 -11,3z" fill="none" stroke="#fff" stroke-width="1.200" stroke-linejoin="round"/><rect x="805.4" y="516.8" width="4.600" height="4.600" fill="#f4f4f4"/><path d="M806.6,520.4l2,-2.400" stroke="#2a5ab0" stroke-width=".8" fill="none"/>
<text x="814.4" y="528.4" text-anchor="middle" font-size="4.700" fill="#fff">Adobe</text>
<text x="814.4" y="533.9" text-anchor="middle" font-size="4.700" fill="#fff">Reader XI</text>
<circle cx="843.7" cy="512.1" r="9.200" fill="#1a7ad8"/><path d="M843.7,505.6l-5,6h3v4h4v-4h3z" fill="#fff"/><path d="M837.7,517.1h12v2h-12z" fill="#fff"/><path d="M846.7,513.1h6v4.500q0,2.500 -3,3.500q-3,-1 -3,-3.500z" fill="#f0c020"/><path d="M849.7,513.1h3v4h-3z" fill="#2a6ad0"/><path d="M846.7,517.1h3v3.800q-3,-1 -3,-3.500z" fill="#2a6ad0"/><rect x="834.7" y="516.8" width="4.600" height="4.600" fill="#f4f4f4"/><path d="M835.9,520.4l2,-2.400" stroke="#2a5ab0" stroke-width=".8" fill="none"/>
<text x="843.7" y="528.4" text-anchor="middle" font-size="4.700" fill="#fff">OneKey</text>
<text x="843.7" y="533.9" text-anchor="middle" font-size="4.700" fill="#fff">Recovery</text>
<rect x="859.0" y="501.1" width="28" height="33" fill="#3a6ab8" fill-opacity=".35" stroke="#6a9ae0" stroke-opacity=".6" stroke-width=".6"/>
<rect x="864.2" y="503.6" width="18.500" height="17.500" fill="#1e6a3a"/><path d="M866.5,505.1h3.200l3.300,10 3.300,-10h3.200l-5,14.500h-3z" fill="#fff"/><path d="M871.0,505.1h4M871.5,507.1h3" stroke="#fff" stroke-width=".7"/><rect x="864.0" y="516.8" width="4.600" height="4.600" fill="#f4f4f4"/><path d="M865.2,520.4l2,-2.400" stroke="#2a5ab0" stroke-width=".8" fill="none"/>
<text x="873.0" y="528.4" text-anchor="middle" font-size="4.700" fill="#fff">Keil uVisio...</text>
<circle cx="902.3" cy="512.1" r="9" fill="#2a8ae0"/><path d="M897.3,506.6q6,-3 8,1q1,4 -3,5q-5,1 -5,-6z" fill="#58b848"/><path d="M904.3,514.6q4,-1 5,2q-2,4 -6,3z" fill="#58b848"/>
<text x="902.3" y="528.4" text-anchor="middle" font-size="4.700" fill="#fff"></text>
<text x="902.3" y="533.9" text-anchor="middle" font-size="4.700" fill="#fff"></text>
</g>
<rect x="880.300" y="514.200" width="42.300" height="19" fill="#fff" stroke="#8a8a8a" stroke-width=".5"/>
<text x="882.6" y="519.2" font-size="4.500" fill="#555">Item type: JPG File</text>
<text x="882.6" y="524.9" font-size="4.500" fill="#555">Rating: Unrated</text>
<text x="882.6" y="530.6" font-size="4.500" fill="#555">Size: 98.2 KB</text>
<rect x="799.400" y="542.200" width="533.600" height="14.800" fill="#0a0d12" fill-opacity=".96"/>
<rect x="819" y="542.200" width="134.200" height="14.800" fill="#32373d"/>
<g fill="#fff"><path d="M805,546.800l3,-.45v3.100h-3zM808.600,546.300l3.900,-.6v3.750h-3.900zM805,550h3v3.100l-3,-.45zM808.600,550h3.900v3.750l-3.900,-.6z"/></g>
<circle cx="826" cy="549.700" r="3.300" fill="none" stroke="#f0f0f0" stroke-width="1"/>
<text x="834" y="551.500" font-size="5.300" fill="#a8acb0">Ask me anything</text>
<g stroke="#b8bcc0" stroke-width=".7" fill="none"><rect x="944.300" y="546.500" width="1.800" height="4" rx=".9"/><path d="M943.300,549.500q1.900,3 3.800,0M945.200,551.500v1.500"/></g>
<g stroke="#f0f0f0" stroke-width=".8" fill="none"><rect x="960" y="547.300" width="5" height="4.800"/><path d="M958.500,548.300v2.800M966.500,548.300v2.800"/></g>
<text x="981.500" y="553.500" text-anchor="middle" font-size="10.500" font-weight="700" fill="#2a8ae8">e</text>
<path d="M995,546.500h3.500l1,1h5.500v6h-10z" fill="#f0c850"/><rect x="996.500" y="549.500" width="7" height="4" fill="#58a8e8"/>
<path d="M1015.500,548h8v6h-8z" fill="#f4f4f4"/><path d="M1017.500,548q0,-2.300 2,-2.300q2,0 2,2.300" stroke="#f4f4f4" stroke-width=".8" fill="none"/><path d="M1017.800,549.800h1.500v1.500h-1.500zM1019.800,549.800h1.500v1.500h-1.500zM1017.800,551.700h1.500v1.500h-1.500zM1019.800,551.700h1.500v1.500h-1.500z" fill="#1a1e24"/>
<circle cx="1039" cy="549.7" r="4" fill="#e0402e"/><path d="M1039.00,547.82L1042.53,547.82A4,4 0 0 1 1038.86,553.70L1040.63,550.64Z" fill="#f8c420"/><path d="M1040.63,550.64L1038.86,553.70A4,4 0 0 1 1035.61,547.58L1037.37,550.64Z" fill="#2da04e"/><circle cx="1039" cy="549.7" r="1.88" fill="#f4f4f4"/><circle cx="1039" cy="549.7" r="1.50" fill="#3f80e8"/>
<rect x="1053.500" y="545.800" width="8.500" height="7.800" fill="#2a5ab8"/><rect x="1058" y="546.800" width="4.500" height="5.800" fill="#e8eef8"/><text x="1056" y="552.200" text-anchor="middle" font-size="5.500" font-weight="700" fill="#fff">W</text>
<g fill="#7ab4f0"><rect x="974.500" y="555.900" width="14" height="1.100"/><rect x="993.500" y="555.900" width="14" height="1.100"/><rect x="1050.500" y="555.900" width="14" height="1.100"/></g>
<g stroke="#e8e8e8" stroke-width=".8" fill="none"><path d="M1236.500,551l2.300,-2.300 2.300,2.300"/><path d="M1247.500,547.500l2,2 -1,1v-5l1,1 -2,2" stroke="#6ab0f8"/><path d="M1255.500,548.700h1.200l1.500,-1.300v5l-1.500,-1.300h-1.200zM1259.500,548q1,1.700 0,3.400"/><path d="M1275,553l4,-5.500v5.500z" fill="#c8c8c8" stroke="none"/><rect x="1283.500" y="548" width="5.500" height="3.300"/><rect x="1283.500" y="548" width="2.200" height="3.300" fill="#e8e8e8"/></g>
<rect x="1264" y="546.800" width="6.500" height="5" fill="#58a0e8"/><path d="M1292.500,546.500h7v5h-3.500l-1.500,1.500v-1.500h-2z" fill="#f0f0f0"/>
<text x="1315.500" y="548.600" text-anchor="middle" font-size="4.300" fill="#f0f0f0">14:32</text>
<text x="1315.500" y="554.800" text-anchor="middle" font-size="4.300" fill="#f0f0f0">06-09-2015</text>
</g>
<rect x="799.900" y="258" width="532.600" height="298.500" rx="10.5" fill="none" stroke="#4a5058" stroke-width="1"/>
</svg>
<!--/DESKTOP-->
<!--MFA-->
<!-- ===== MFA ===== -->
<div class="panel" style="left:162px;top:648.5px;width:591px;height:327.5px"></div>
<div class="t" style="left:194.20px;top:684.56px;font-size:31px;line-height:31px;color:#cacaca;font-weight:700;transform:scaleX(0.9201);transform-origin:0 0;">MFA Highlights</div>
<div class="abs" style="left:196.6px;top:747.5px;width:5px;height:5px;border-radius:50%;background:#c4c4c4"></div>
<div class="t" style="left:219.10px;top:739.06px;font-size:19.3px;line-height:19.3px;color:#c2c2c2;letter-spacing:-0.271px;">Strong MFA</div>
<div class="abs" style="left:196.6px;top:785.3px;width:5px;height:5px;border-radius:50%;background:#c4c4c4"></div>
<div class="t" style="left:219.10px;top:776.86px;font-size:19.3px;line-height:19.3px;color:#c2c2c2;letter-spacing:-0.069px;">Passwordless login</div>
<div class="abs" style="left:196.6px;top:823.2px;width:5px;height:5px;border-radius:50%;background:#c4c4c4"></div>
<div class="t" style="left:219.10px;top:814.76px;font-size:19.3px;line-height:19.3px;color:#c2c2c2;letter-spacing:0.087px;">Context-aware access</div>
<div class="abs" style="left:196.6px;top:860.8px;width:5px;height:5px;border-radius:50%;background:#c4c4c4"></div>
<div class="t" style="left:219.10px;top:852.36px;font-size:19.3px;line-height:19.3px;color:#c2c2c2;letter-spacing:0.186px;">Broad app integration</div>
<div class="abs" style="left:196.6px;top:898.5px;width:5px;height:5px;border-radius:50%;background:#c4c4c4"></div>
<div class="t" style="left:219.10px;top:890.06px;font-size:19.3px;line-height:19.3px;color:#c2c2c2;letter-spacing:0.289px;">Centralized identity control</div>
<div class="abs" style="left:498.8px;top:660.8px;width:229.7px;height:298.6px;background:#fff;border-radius:17px"></div>
<svg style="left:583px;top:668px" width="64" height="24" viewBox="583 668 64 24"><polygon points="586.6,672.4 589.8,672.4 594.6,683.4 592.2,685.4" fill="#d8232a"/><polygon points="585.2,677.4 587,677.2 589.6,682.8 588.2,684" fill="#f4b41a"/><text x="595.8" y="683.1" font-family="Liberation Sans, sans-serif" font-size="16.9" font-weight="400" fill="#454545" stroke="#454545" stroke-width=".4" textLength="47" lengthAdjust="spacingAndGlyphs">accops</text></svg>
<div class="t" style="left:549.70px;top:696.76px;font-size:16px;line-height:16px;color:#111;font-weight:700;transform:scaleX(0.8861);transform-origin:0 0;-webkit-text-stroke:.35px #111;">Verify Your Identity</div>
<div class="t" style="left:514.70px;top:725.31px;font-size:7.2px;line-height:7.2px;color:#555;letter-spacing:0.134px;">Verify your identity using one of the following methods</div>
<div class="abs" style="left:518.2px;top:744.50px;width:8px;height:8px;border-radius:50%;border:.8px solid #d8d8d8;background:#fff"></div>
<div class="t" style="left:534.00px;top:742.01px;font-size:6.6px;line-height:6.6px;color:#151515;font-weight:700;letter-spacing:-.05px;">Text Message (SMS)</div>
<div class="t" style="left:534.00px;top:751.78px;font-size:6.05px;line-height:6.05px;color:#6a6a6a;letter-spacing:.07px;">Receive a OTP on your registered mobile number.</div>
<div class="abs" style="left:515.6px;top:759.10px;width:196.6px;height:.7px;background:#e9e9e9"></div>
<div class="abs" style="left:518.2px;top:769.85px;width:8px;height:8px;border-radius:50%;border:2.5px solid #2c50ae;background:#fff"></div>
<div class="t" style="left:534.00px;top:767.36px;font-size:6.6px;line-height:6.6px;color:#151515;font-weight:700;letter-spacing:-.05px;">Email</div>
<div class="t" style="left:534.00px;top:777.13px;font-size:6.05px;line-height:6.05px;color:#6a6a6a;letter-spacing:.07px;">We'll send a secure 6-digit code to your primary inbox.</div>
<div class="abs" style="left:515.6px;top:784.45px;width:196.6px;height:.7px;background:#e9e9e9"></div>
<div class="abs" style="left:518.2px;top:795.20px;width:8px;height:8px;border-radius:50%;border:.8px solid #d8d8d8;background:#fff"></div>
<div class="t" style="left:534.00px;top:792.71px;font-size:6.6px;line-height:6.6px;color:#151515;font-weight:700;letter-spacing:-.05px;">Mobile Token</div>
<div class="t" style="left:534.00px;top:802.48px;font-size:6.05px;line-height:6.05px;color:#6a6a6a;letter-spacing:.07px;">Use a time-based code from Accops HyID application.</div>
<div class="abs" style="left:515.6px;top:809.80px;width:196.6px;height:.7px;background:#e9e9e9"></div>
<div class="abs" style="left:518.2px;top:820.55px;width:8px;height:8px;border-radius:50%;border:.8px solid #d8d8d8;background:#fff"></div>
<div class="t" style="left:534.00px;top:818.06px;font-size:6.6px;line-height:6.6px;color:#151515;font-weight:700;letter-spacing:-.05px;">Push Notification</div>
<div class="t" style="left:534.00px;top:827.83px;font-size:6.05px;line-height:6.05px;color:#6a6a6a;letter-spacing:.07px;">Send a sign-in request to your registered device.</div>
<div class="abs" style="left:515.6px;top:835.15px;width:196.6px;height:.7px;background:#e9e9e9"></div>
<div class="abs" style="left:518.2px;top:845.90px;width:8px;height:8px;border-radius:50%;border:.8px solid #d8d8d8;background:#fff"></div>
<div class="t" style="left:534.00px;top:843.41px;font-size:6.6px;line-height:6.6px;color:#151515;font-weight:700;letter-spacing:-.05px;">Touch ID</div>
<div class="t" style="left:534.00px;top:853.18px;font-size:6.05px;line-height:6.05px;color:#6a6a6a;letter-spacing:.07px;">Use Touch ID for passwordless access.</div>
<div class="abs" style="left:515.6px;top:860.50px;width:196.6px;height:.7px;background:#e9e9e9"></div>
<div class="abs" style="left:518.2px;top:871.25px;width:8px;height:8px;border-radius:50%;border:.8px solid #d8d8d8;background:#fff"></div>
<div class="t" style="left:534.00px;top:868.76px;font-size:6.6px;line-height:6.6px;color:#151515;font-weight:700;letter-spacing:-.05px;">FIDO (Hardware Security Key)</div>
<div class="t" style="left:534.00px;top:878.53px;font-size:6.05px;line-height:6.05px;color:#6a6a6a;letter-spacing:.07px;">Plug in or tap your hardware security key.</div>
<div class="abs" style="left:515.6px;top:885.85px;width:196.6px;height:.7px;background:#e9e9e9"></div>
<div class="abs" style="left:514.7px;top:906.3px;width:198.3px;height:21.4px;border-radius:11px;background:#3457a8"></div>
<div class="t" style="left:596.06px;top:913.86px;font-size:8.2px;line-height:8.2px;color:#fff;font-weight:700;">Continue</div>
<div class="t" style="left:601.73px;top:938.22px;font-size:7.3px;line-height:7.3px;color:#2b3a9e;font-weight:700;">Cancel</div>
<!--/MFA-->
<!--ADMIN-->
<!-- ===== Admin console ===== -->
<div class="abs" style="left:799.6px;top:651px;width:548.2px;height:321.2px;background:#17181c;border:1px solid #6a6c6e;border-radius:10px;overflow:hidden"></div>
<div class="abs" style="left:800.6px;top:674.7px;width:112.2px;height:296.5px;background:#1b1c21;border-radius:0 0 0 9px"></div>
<div class="abs" style="left:800.6px;top:674.2px;width:546.2px;height:.8px;background:#2b2d34"></div>
<div class="abs" style="left:912.7px;top:674.7px;width:.8px;height:296.5px;background:#2b2d34"></div>
<div class="t" style="left:808.50px;top:656.49px;font-size:11px;line-height:11px;color:#fff;font-weight:700;letter-spacing:-0.073px;">Add policy</div>
<div class="t" style="left:806.70px;top:684.83px;font-size:6.7px;line-height:6.7px;color:#8e9099;">Basic details</div>
<div class="abs" style="left:804.6px;top:696px;width:1.3px;height:11px;background:#4d6fd6"></div>
<div class="t" style="left:808.10px;top:699.23px;font-size:6.7px;line-height:6.7px;color:#5274d8;">Configure rules</div>
<div class="t" style="left:806.70px;top:713.73px;font-size:6.7px;line-height:6.7px;color:#8e9099;">Workspaces</div>
<div class="t" style="left:806.70px;top:727.93px;font-size:6.7px;line-height:6.7px;color:#8e9099;">Applications</div>
<div class="t" style="left:806.70px;top:742.33px;font-size:6.7px;line-height:6.7px;color:#8e9099;">Profiles</div>
<div class="t" style="left:920.70px;top:682.06px;font-size:8.2px;line-height:8.2px;color:#f2f2f2;font-weight:700;letter-spacing:-0.008px;">Configure rules</div>
<div class="t" style="left:920.70px;top:695.10px;font-size:6.5px;line-height:6.5px;color:#d4d4d6;letter-spacing:0.109px;">Configure rules for this access policy. Use the tabs to set conditions that must match all, any, or none of the selected criteria.</div>
<div class="abs" style="left:913.5px;top:705.2px;width:433.3px;height:.8px;background:#2b2d34"></div>
<div class="abs" style="left:920.7px;top:713.9px;width:146.6px;height:16.9px;border:.8px solid #2d2f37;border-radius:4px"></div>
<div class="abs" style="left:921.3px;top:714.5px;width:40.7px;height:15.7px;background:#272a33;border-radius:3.5px"></div>
<div class="t" style="left:928.81px;top:719.88px;font-size:6.4px;line-height:6.4px;color:#dcdcde;">Match all</div>
<div class="t" style="left:974.06px;top:719.88px;font-size:6.4px;line-height:6.4px;color:#dcdcde;">Match any</div>
<div class="t" style="left:1023.30px;top:719.88px;font-size:6.4px;line-height:6.4px;color:#dcdcde;">Match none</div>
<div class="t" style="left:920.70px;top:744.66px;font-size:8.2px;line-height:8.2px;color:#f2f2f2;font-weight:700;letter-spacing:0.028px;">Match all</div>
<div class="abs" style="left:960px;top:741.8px;width:23.2px;height:12.7px;border:.8px solid #3c3f48;border-radius:6.4px;background:#1f2127"></div>
<div class="t" style="left:966.44px;top:746.15px;font-size:4.9px;line-height:4.9px;color:#d8d8da;">AND</div>
<div class="t" style="left:920.70px;top:758.00px;font-size:6.5px;line-height:6.5px;color:#c4c4c8;letter-spacing:0.109px;">All criteria must be satisfied.</div>
<div class="abs" style="left:920.7px;top:772.4px;width:419.3px;height:96px;background:#1c1d23;border:.8px solid #2c2e36;border-radius:4px"></div>
<div class="t" style="left:932px;top:785.27px;font-size:6.3px;line-height:6.3px;color:#e2e2e4;font-weight:700;letter-spacing:-.12px">Condition type <span style="color:#4d6fd6">*</span></div>
<div class="t" style="left:1066.4px;top:785.27px;font-size:6.3px;line-height:6.3px;color:#e2e2e4;font-weight:700;letter-spacing:-.12px">Identity provider <span style="color:#4d6fd6">*</span></div>
<div class="t" style="left:1201.3px;top:785.27px;font-size:6.3px;line-height:6.3px;color:#e2e2e4;font-weight:700;letter-spacing:-.12px">Attribute <span style="color:#4d6fd6">*</span></div>
<div class="t" style="left:1066.4px;top:826.17px;font-size:6.3px;line-height:6.3px;color:#e2e2e4;font-weight:700;letter-spacing:-.12px">Value <span style="color:#4d6fd6">*</span></div>
<div class="abs" style="left:932.3px;top:796.7px;width:126.6px;height:17.1px;border:1.3px solid #4a6ec8;border-radius:3.5px;background:#111216"></div>
<div class="t" style="left:937.30px;top:801.71px;font-size:7.2px;line-height:7.2px;color:#f2f2f2;letter-spacing:0.252px;">Identity</div>
<svg style="left:1045.5px;top:803px" width="7" height="5" viewBox="0 0 7 5"><polyline points="1.2,1.2 3.5,3.5 5.8,1.2" fill="none" stroke="#a0a2aa" stroke-width=".8" stroke-linecap="round" stroke-linejoin="round"/></svg>
<div class="abs" style="left:1066.4px;top:796.7px;width:127.4px;height:17.1px;border:1.2px solid #8c8c8c;border-radius:3.5px;background:#111216"></div>
<svg style="left:1072.2px;top:801.6px" width="8" height="8" viewBox="0 0 8 8"><circle cx="3.5" cy="3.5" r="2.6" fill="none" stroke="#9a9ca4" stroke-width=".7"/><line x1="5.4" y1="5.4" x2="6.8" y2="6.8" stroke="#9a9ca4" stroke-width=".7" stroke-linecap="round"/></svg>
<div class="t" style="left:1083.50px;top:801.77px;font-size:7px;line-height:7px;color:#8a8d96;letter-spacing:0.320px;">Select identity provider</div>
<div class="abs" style="left:1201.3px;top:796.7px;width:127.4px;height:17.1px;border:.8px solid #2c2e36;border-radius:3.5px;background:#17181d"></div>
<div class="t" style="left:1206.70px;top:801.77px;font-size:7px;line-height:7px;color:#8a8d96;letter-spacing:0.306px;">Select attribute</div>
<svg style="left:1314.3px;top:803px" width="7" height="5" viewBox="0 0 7 5"><polyline points="1.2,1.2 3.5,3.5 5.8,1.2" fill="none" stroke="#a0a2aa" stroke-width=".8" stroke-linecap="round" stroke-linejoin="round"/></svg>
<div class="abs" style="left:1066.4px;top:836.4px;width:262.3px;height:18.1px;background:#2a2d38;border-radius:3.5px"></div>
<div class="t" style="left:1072.40px;top:843.08px;font-size:6.4px;line-height:6.4px;color:#7c7f8a;letter-spacing:0.070px;">Enter value</div>
<div class="abs" style="left:931.6px;top:815.9px;width:128px;height:112px;background:#16171b;border:.8px solid #2a2c34;border-radius:4px;box-shadow:0 2px 6px rgba(0,0,0,.4)"></div>
<div class="abs" style="left:934.8px;top:840.4px;width:122px;height:19.2px;background:#2a2d38;border-radius:3px"></div>
<div class="t" style="left:939.90px;top:825.12px;font-size:7.3px;line-height:7.3px;color:#f0f0f2;letter-spacing:0.162px;">None</div>
<div class="t" style="left:939.90px;top:846.62px;font-size:7.3px;line-height:7.3px;color:#f0f0f2;letter-spacing:0.259px;">Identity</div>
<div class="t" style="left:939.90px;top:868.22px;font-size:7.3px;line-height:7.3px;color:#f0f0f2;letter-spacing:0.226px;">Location</div>
<div class="t" style="left:939.90px;top:889.92px;font-size:7.3px;line-height:7.3px;color:#f0f0f2;letter-spacing:0.112px;">Time</div>
<div class="t" style="left:939.90px;top:911.52px;font-size:7.3px;line-height:7.3px;color:#f0f0f2;letter-spacing:0.120px;">Rule group</div>
<svg style="left:1043.5px;top:847px" width="8" height="6" viewBox="0 0 8 6"><polyline points="1.2,3.2 3,4.8 6.6,1" fill="none" stroke="#5a86e0" stroke-width=".9" stroke-linecap="round" stroke-linejoin="round"/></svg>
<div class="abs" style="left:1287.3px;top:875.8px;width:52.3px;height:16px;border:.8px solid #2c2e36;border-radius:3.5px"></div>
<svg style="left:1294px;top:880.5px" width="7" height="7" viewBox="0 0 7 7"><path d="M3.5,.8v5.400M.8,3.500h5.400" stroke="#b4b6bc" stroke-width=".7" stroke-linecap="round"/></svg>
<div class="t" style="left:1306.50px;top:880.60px;font-size:6.5px;line-height:6.5px;color:#c8c8cc;letter-spacing:0.130px;">New rule</div>
<div class="abs" style="left:913.5px;top:936.8px;width:433.3px;height:.8px;background:#2b2d34"></div>
<div class="abs" style="left:924.1px;top:952.5px;width:8px;height:8px;background:#606060;border-radius:1.5px"></div>
<div class="t" style="left:935.20px;top:954.17px;font-size:6.3px;line-height:6.3px;color:#8e8e92;letter-spacing:0.147px;">Save as rule group</div>
<div class="t" style="left:1220.95px;top:954.10px;font-size:6.5px;line-height:6.5px;color:#d8d8da;font-weight:700;letter-spacing:-0.005px;">Cancel</div>
<div class="abs" style="left:1256.8px;top:948.4px;width:35.8px;height:16.4px;border:.8px solid #3c3f48;border-radius:3.5px;background:#15161a"></div>
<div class="t" style="left:1266.93px;top:954.10px;font-size:6.5px;line-height:6.5px;color:#f2f2f2;font-weight:700;">Back</div>
<div class="abs" style="left:1300.1px;top:948.4px;width:36.3px;height:16.4px;border-radius:3.5px;background:#3d5fc4"></div>
<div class="t" style="left:1311.25px;top:954.10px;font-size:6.5px;line-height:6.5px;color:#fff;font-weight:700;">Next</div>
<!--/ADMIN-->
</body>
</html>
